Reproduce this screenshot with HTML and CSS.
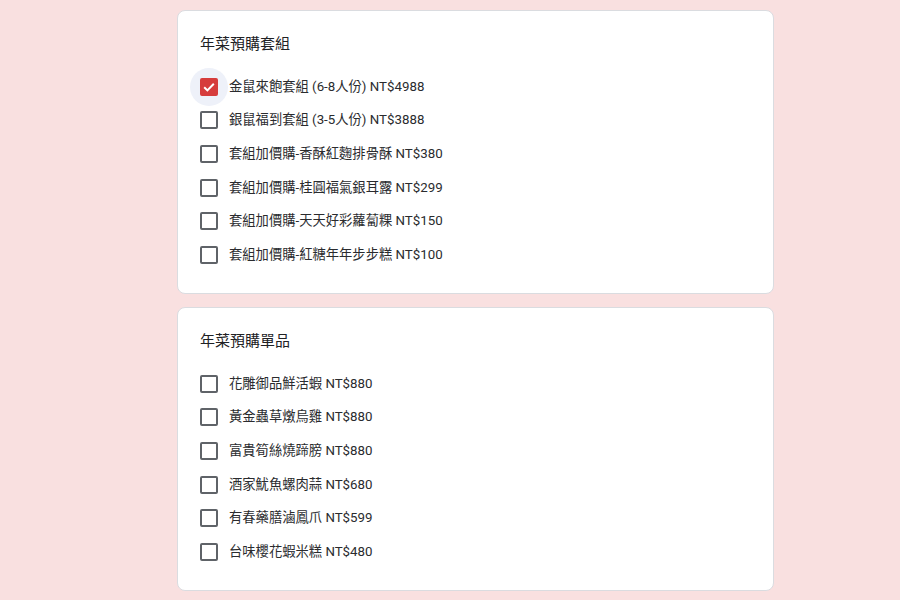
FILE: index.html
```html
<!DOCTYPE html>
<html lang="zh-Hant">
<head>
  <meta charset="UTF-8" />
  <meta name="viewport" content="width=device-width, initial-scale=1.0" />
  <title>年菜預購</title>
  <link rel="stylesheet" href="styles.css">
</head>
<body>
  <div class="form">
    <!-- 套組 -->
    <div class="card">
      <div class="card-title">年菜預購套組</div>
      <div class="options">
        <label class="option">
          <span class="box checked">
            <svg viewBox="0 0 18 18" width="18" height="18"><path d="M4.2 9.2l3.2 3.2 6.4-6.6" fill="none" stroke="#fff" stroke-width="2"/></svg>
          </span>
          <span class="label">金鼠來飽套組 (6-8人份) NT$4988</span>
        </label>
        <label class="option"><span class="box"></span><span class="label">銀鼠福到套組 (3-5人份) NT$3888</span></label>
        <label class="option"><span class="box"></span><span class="label">套組加價購-香酥紅麴排骨酥 NT$380</span></label>
        <label class="option"><span class="box"></span><span class="label">套組加價購-桂圓福氣銀耳露 NT$299</span></label>
        <label class="option"><span class="box"></span><span class="label">套組加價購-天天好彩蘿蔔粿 NT$150</span></label>
        <label class="option"><span class="box"></span><span class="label">套組加價購-紅糖年年步步糕 NT$100</span></label>
      </div>
    </div>

    <!-- 單品 -->
    <div class="card">
      <div class="card-title">年菜預購單品</div>
      <div class="options">
        <label class="option"><span class="box"></span><span class="label">花雕御品鮮活蝦 NT$880</span></label>
        <label class="option"><span class="box"></span><span class="label">黃金蟲草燉烏雞 NT$880</span></label>
        <label class="option"><span class="box"></span><span class="label">富貴筍絲燒蹄膀 NT$880</span></label>
        <label class="option"><span class="box"></span><span class="label">酒家魷魚螺肉蒜 NT$680</span></label>
        <label class="option"><span class="box"></span><span class="label">有春藥膳滷鳳爪 NT$599</span></label>
        <label class="option"><span class="box"></span><span class="label">台味櫻花蝦米糕 NT$480</span></label>
      </div>
    </div>
  </div>
</body>
</html>
```

FILE: styles.css
```css
* {
  margin: 0;
  padding: 0;
  box-sizing: border-box;
}

body {
  background: #f9e0e0;
  font-family: Roboto, "Noto Sans CJK TC", sans-serif;
  color: #202124;
  overflow: hidden;
}

.form {
  width: 597px;
  margin-left: 177px;
  padding-top: 10px;
  display: flex;
  flex-direction: column;
  gap: 13px;
}

.card {
  background: #fff;
  border: 1px solid #dadce0;
  border-radius: 8px;
  height: 284px;
  padding: 23px 22px 0;
}

.card-title {
  font-size: 15px;
  line-height: 20px;
}

.options {
  margin-top: 16px;
  display: flex;
  flex-direction: column;
}

.option {
  position: relative;
  isolation: isolate;
  height: 33.6px;
  display: flex;
  align-items: center;
  gap: 11px;
  font-size: 13.3px;
  color: #2a2b2e;
  cursor: pointer;
}

.box {
  position: relative;
  width: 18px;
  height: 18px;
  flex: none;
  border: 2px solid #5f6368;
  border-radius: 2px;
}

.box.checked {
  background: #d63c3c;
  border-color: #d63c3c;
}

/* focus ripple around the checked box */
.box.checked::before {
  content: "";
  position: absolute;
  left: -12px;
  top: -12px;
  width: 38px;
  height: 38px;
  border-radius: 50%;
  background: #eef1f9;
  z-index: -1;
}

.box.checked svg {
  position: absolute;
  left: -2px;
  top: -2px;
}

.label {
  line-height: 20px;
}
```
